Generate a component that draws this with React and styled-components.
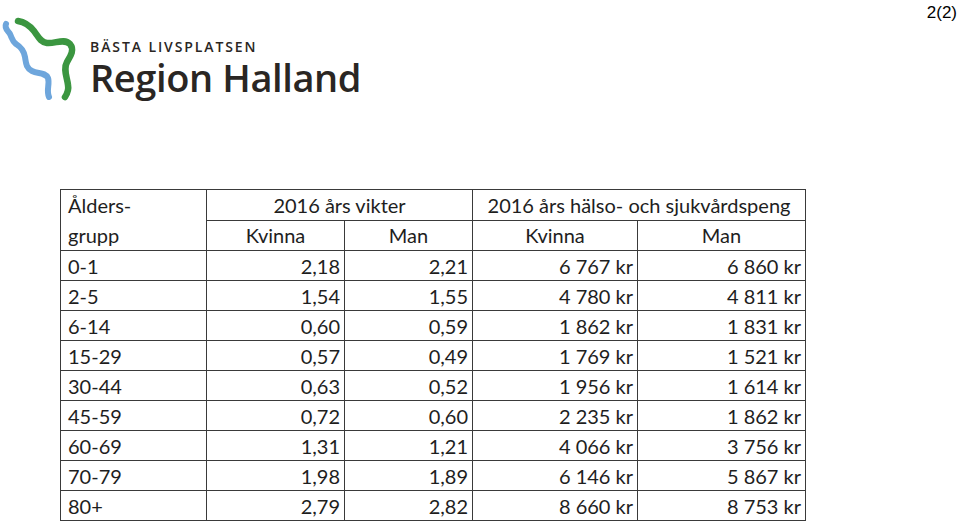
import React from "react";
import styled, { createGlobalStyle } from "styled-components";

const GlobalStyle = createGlobalStyle`
  html, body {
    margin: 0;
    padding: 0;
    background: #fff;
  }
  body {
    font-family: "Lato", "Liberation Sans", sans-serif;
    color: #1e1e1e;
  }
`;

const Page = styled.div`
  width: 959px;
  height: 524px;
  overflow: hidden;
  box-sizing: border-box;
`;

const Top = styled.div`
  display: flex;
  justify-content: space-between;
  align-items: flex-start;
  height: 189px;
`;

const Logo = styled.div`
  display: flex;
  align-items: flex-start;
  padding-top: 15px;
`;

const LogoText = styled.div`
  display: flex;
  flex-direction: column;
  margin-left: 10px;
  padding-top: 23px;
  font-family: "Open Sans", "Noto Sans", sans-serif;
  color: #2a2623;
`;

const Tagline = styled.div`
  font-size: 14px;
  font-weight: 600;
  letter-spacing: 1.9px;
  line-height: 18px;
`;

const Name = styled.div`
  font-size: 38px;
  font-weight: 600;
  line-height: 42px;
  letter-spacing: -0.4px;
`;

const PageNo = styled.div`
  font-family: "Liberation Sans", Arial, sans-serif;
  font-size: 17px;
  padding: 3px 2px 0 0;
  color: #000;
`;

const Table = styled.table`
  border-collapse: collapse;
  margin-left: 60px;
  table-layout: fixed;
  font-size: 20px;
`;

const Cell = styled.td`
  border: 1.5px solid #3a3a3a;
  height: 29px;
  padding: ${(p) => (p.$align === "left" ? "0 0 0 7px" : "0 4px 0 0")};
  text-align: ${(p) => p.$align || "right"};
  line-height: 28px;
  white-space: nowrap;
  vertical-align: middle;
`;

const GroupCell = styled.td`
  border: 1.5px solid #3a3a3a;
  padding: 0 0 0 7px;
  line-height: 30px;
  vertical-align: middle;
`;

const HeadCell = styled.td`
  border: 1.5px solid #3a3a3a;
  height: 28px;
  padding: 0;
  text-align: center;
  line-height: 28px;
  white-space: nowrap;
`;

const rows = [
  ["0-1", "2,18", "2,21", "6 767 kr", "6 860 kr"],
  ["2-5", "1,54", "1,55", "4 780 kr", "4 811 kr"],
  ["6-14", "0,60", "0,59", "1 862 kr", "1 831 kr"],
  ["15-29", "0,57", "0,49", "1 769 kr", "1 521 kr"],
  ["30-44", "0,63", "0,52", "1 956 kr", "1 614 kr"],
  ["45-59", "0,72", "0,60", "2 235 kr", "1 862 kr"],
  ["60-69", "1,31", "1,21", "4 066 kr", "3 756 kr"],
  ["70-79", "1,98", "1,89", "6 146 kr", "5 867 kr"],
  ["80+", "2,79", "2,82", "8 660 kr", "8 753 kr"],
];

const RiverLogo = () => (
  <svg width="80" height="90" viewBox="0 15 80 90">
    <path
      d="M6 24 C4 28 8 31 10 34 C12 38 12 41 16 44 C21 47 24 51 25 57 C26 63 26 68 32 71 C38 74 45 72 48 78 C50 84 46 90 49 97"
      fill="none"
      stroke="#6ea6dc"
      strokeWidth="6"
      strokeLinecap="round"
    />
    <path
      d="M18 21 C24 22 30 26 34 31 C38 36 40 42 47 43 C55 44 64 38 70 44 C75 50 70 57 67 62 C63 69 67 77 68 85 C69 90 67 94 65 97"
      fill="none"
      stroke="#3b9640"
      strokeWidth="6.5"
      strokeLinecap="round"
    />
  </svg>
);

export default function App() {
  return (
    <Page>
      <GlobalStyle />
      <Top>
        <Logo>
          <RiverLogo />
          <LogoText>
            <Tagline>BÄSTA LIVSPLATSEN</Tagline>
            <Name>Region Halland</Name>
          </LogoText>
        </Logo>
        <PageNo>2(2)</PageNo>
      </Top>
      <Table>
        <colgroup>
          <col style={{ width: 146 }} />
          <col style={{ width: 138 }} />
          <col style={{ width: 128 }} />
          <col style={{ width: 165 }} />
          <col style={{ width: 168 }} />
        </colgroup>
        <tbody>
          <tr>
            <GroupCell rowSpan={2}>
              Ålders-
              <br />
              grupp
            </GroupCell>
            <HeadCell colSpan={2}>2016 års vikter</HeadCell>
            <HeadCell colSpan={2}>2016 års hälso- och sjukvårdspeng</HeadCell>
          </tr>
          <tr>
            <HeadCell>Kvinna</HeadCell>
            <HeadCell>Man</HeadCell>
            <HeadCell>Kvinna</HeadCell>
            <HeadCell>Man</HeadCell>
          </tr>
          {rows.map((r) => (
            <tr key={r[0]}>
              <Cell $align="left">{r[0]}</Cell>
              {r.slice(1).map((v, i) => (
                <Cell key={i}>{v}</Cell>
              ))}
            </tr>
          ))}
        </tbody>
      </Table>
    </Page>
  );
}
